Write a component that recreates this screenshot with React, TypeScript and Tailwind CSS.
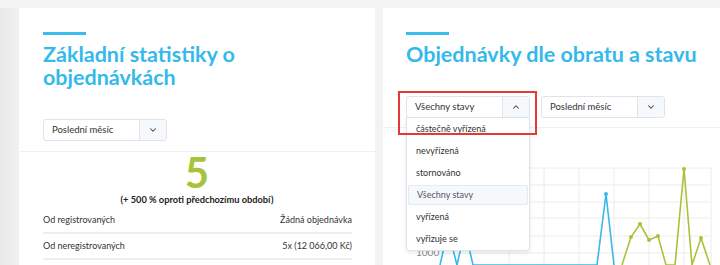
import { ChevronDown, ChevronUp } from 'lucide-react';

const font = { fontFamily: 'Lato, "Noto Sans", sans-serif' };

const options = ['částečně vyřízená', 'nevyřízená', 'stornováno', 'Všechny stavy', 'vyřízená', 'vyřizuje se'];

function Select({ label, open = false }: { label: string; open?: boolean }) {
    return (
        <div className="flex h-[22px] w-[124px] rounded-[3px] border border-[#dfe4ea] bg-white text-[9.5px] text-[#333]">
            <div className="flex flex-1 items-center pl-[8px]">{label}</div>
            <div className="flex w-[27px] items-center justify-center border-l border-[#dfe4ea] bg-[#f6f9fc] text-[#444]">
                {open ? <ChevronUp size={10} strokeWidth={2.5} /> : <ChevronDown size={10} strokeWidth={2.5} />}
            </div>
        </div>
    );
}

function Chart() {
    const vx = [126, 161, 196, 231, 266, 301, 328];
    const hy = [8, 25, 42, 58, 76, 93];
    const blue = [[57, 105], [65, 70], [74, 105], [82, 70], [90, 105], [214, 105], [223, 34], [231, 105]];
    const green = [[239, 105], [248, 77], [257, 64], [266, 80], [275, 76], [283, 105], [292, 105], [301, 9], [309, 105], [318, 78], [327, 105]];
    const pts = (p: number[][]) => p.map(([x, y]) => `${x},${y}`).join(' ');
    return (
        <svg width="337" height="105" className="block">
            {vx.map((x) => (
                <line key={x} x1={x} x2={x} y1={8} y2={105} stroke="#ececec" strokeWidth="1" />
            ))}
            {hy.map((y) => (
                <line key={y} x1={56} x2={328} y1={y} y2={y} stroke="#ececec" strokeWidth="1" />
            ))}
            <text x="33" y="96" fontSize="10" fill="#888" style={font}>1000</text>
            <polyline points={pts(blue)} fill="none" stroke="#3ab8e8" strokeWidth="1.6" />
            <polyline points={pts(green)} fill="none" stroke="#a7c33a" strokeWidth="1.6" />
            {blue.filter(([, y]) => y < 105).map(([x, y]) => (
                <circle key={`b${x}`} cx={x} cy={y} r="2" fill="#3ab8e8" />
            ))}
            {green.filter(([, y]) => y < 105).map(([x, y]) => (
                <circle key={`g${x}`} cx={x} cy={y} r="2" fill="#a7c33a" />
            ))}
        </svg>
    );
}

export default function App() {
    return (
        <div className="flex h-[265px] w-[720px] gap-2 overflow-hidden bg-[#f3f3f3] pt-2" style={font}>
            <div className="w-[19px] shrink-0 bg-gradient-to-r from-[#e9e9e9] to-[#f1f1f1]" />

            <div className="-ml-2 w-[356px] shrink-0 bg-white">
                <div className="px-6 pt-6">
                    <div className="h-[3px] w-[43px] bg-[#3bbcec]" />
                    <h2 className="mt-[8px] text-[21.5px] font-bold leading-[23px] text-[#35b9ea]">
                        Základní statistiky o<br />objednávkách
                    </h2>
                    <div className="mt-[30px]">
                        <Select label="Poslední měsíc" />
                    </div>
                </div>
                <div className="mt-[10px] h-px bg-[#eef0f2]" />
                <div className="px-6">
                    <div className="text-center text-[42px] font-bold leading-[40px] text-[#a7c33a]">5</div>
                    <div className="text-center text-[9.25px] font-bold leading-[16px] text-[#222]">
                        (+ 500 % oproti předchozímu období)
                    </div>
                    <div className="mr-[-1px] text-[9px] text-[#333]">
                        <div className="flex h-[26px] items-center justify-between border-b-2 border-[#e9eef3]">
                            <span>Od registrovaných</span>
                            <span>Žádná objednávka</span>
                        </div>
                        <div className="flex h-[26px] items-center justify-between border-b-2 border-[#e9eef3]">
                            <span>Od neregistrovaných</span>
                            <span>5x (12 066,00 Kč)</span>
                        </div>
                    </div>
                </div>
            </div>

            <div className="relative flex-1 bg-white">
                <div className="px-[23px] pt-6">
                    <div className="h-[3px] w-[43px] bg-[#3bbcec]" />
                    <h2 className="mt-[8px] whitespace-nowrap text-[21.5px] font-bold leading-[23px] text-[#35b9ea]">
                        Objednávky dle obratu a stavu
                    </h2>
                    <div className="mt-[30px] flex gap-[11px]">
                        <div className="relative">
                            <Select label="Všechny stavy" open />
                            <div className="absolute left-0 top-[21px] z-10 w-[124px] rounded-b-[3px] border border-[#dfe4ea] bg-white text-[9px] text-[#333] shadow-[0_2px_4px_rgba(0,0,0,0.08)]">
                                {options.map((o) => (
                                    <div
                                        key={o}
                                        className={
                                            o === 'Všechny stavy'
                                                ? 'mx-[1px] my-[1px] flex h-[20px] items-center rounded-[2px] border border-[#e3ebf2] bg-[#f5f9fc] pl-[8px] text-[#556]'
                                                : 'flex h-[22px] items-center pl-[9px]'
                                        }
                                    >
                                        {o}
                                    </div>
                                ))}
                            </div>
                            <div className="pointer-events-none absolute left-[-8px] top-[-5px] z-20 h-[44px] w-[139px] border-2 border-[#e53935]" />
                        </div>
                        <Select label="Poslední měsíc" />
                    </div>
                </div>
                <div className="mt-[9px] h-px bg-[#eef0f2]" />
                <div className="pt-[32px]">
                    <Chart />
                </div>
            </div>
        </div>
    );
}
